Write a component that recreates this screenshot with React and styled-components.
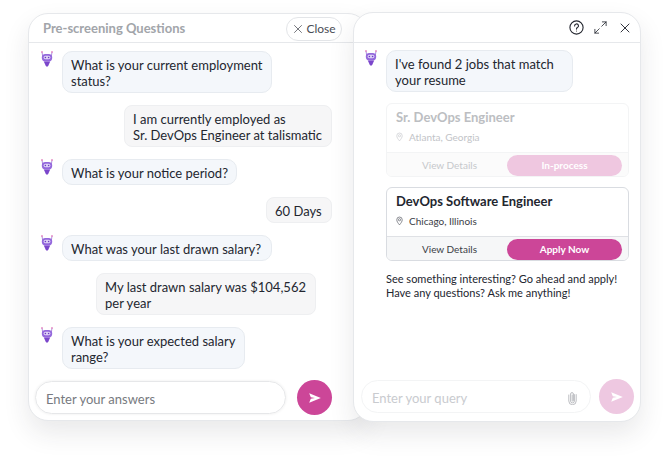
import React from "react";
import styled, { createGlobalStyle } from "styled-components";
import { X, Maximize2 } from "lucide-react";

const GlobalStyle = createGlobalStyle`
  html, body {
    margin: 0;
    padding: 0;
    background: #fff;
    font-family: "Lato", "Liberation Sans", sans-serif;
    color: #23262f;
  }
`;

const Stage = styled.div`
  display: flex;
  align-items: flex-start;
  width: 669px;
  height: 466px;
  overflow: hidden;
  padding: 12px 0 0 28px;
  box-sizing: border-box;
`;

const Panel = styled.section`
  background: #fff;
  border: 1px solid #e6e8eb;
  border-radius: 20px;
  box-shadow: 0 12px 26px rgba(40, 40, 50, 0.1);
  box-sizing: border-box;
  display: flex;
  flex-direction: column;
  height: 410px;
  flex: none;
`;

const LeftPanel = styled(Panel)`
  width: 340px;
  margin-top: 1px;
  height: 408px;
`;

const RightPanel = styled(Panel)`
  width: 288px;
  margin-left: -15px;
  position: relative;
  z-index: 1;
`;

const Header = styled.header`
  align-items: center;
  border-bottom: 1px solid #e6e8eb;
  box-sizing: border-box;
  display: flex;
  flex: none;
  height: 30px;
  justify-content: space-between;
`;

const LeftHeader = styled(Header)`
  padding: 0 25px 0 14px;
  height: 29px;
`;

const RightHeader = styled(Header)`
  justify-content: flex-end;
  gap: 8.5px;
  padding: 0 7px 0 0;
`;

const HeaderTitle = styled.h3`
  color: #a2a5aa;
  font-size: 13px;
  font-weight: 700;
  margin: 0;
`;

const CloseButton = styled.button`
  align-items: center;
  background: #fff;
  border: 1px solid #e3e5e8;
  border-radius: 12px;
  color: #4a4d55;
  display: flex;
  font-family: inherit;
  font-size: 12px;
  gap: 1px;
  height: 24px;
  justify-content: center;
  margin-top: 1px;
  padding: 0 1px 0 0;
  width: 56px;
`;

const IconButton = styled.span`
  align-items: center;
  color: #23262f;
  display: flex;
  height: 16px;
  justify-content: center;
  width: 16px;
`;

const Messages = styled.div`
  display: flex;
  flex: 1;
  flex-direction: column;
  gap: 12px;
  overflow: hidden;
  padding: ${(props) => props.$top}px 0 0 ${(props) => props.$left}px;
`;

const BotRow = styled.div`
  align-items: flex-start;
  display: flex;
  gap: 9px;
`;

const Avatar = styled.svg`
  flex: none;
  height: 16px;
  margin-left: 2px;
  width: 12px;
`;

const Bubble = styled.div`
  background: #f4f7fb;
  border: 1px solid #e7ebf0;
  border-radius: 10px;
  box-sizing: border-box;
  font-size: 13px;
  line-height: 16px;
  padding: 5px 8px 3px;
  width: ${(props) => props.$width}px;
`;

const Answer = styled.div`
  align-self: flex-end;
  background: #f6f6f7;
  border: 1px solid #eeeff1;
  border-radius: 8px;
  box-sizing: border-box;
  font-size: 13px;
  line-height: 16px;
  margin-right: ${(props) => props.$inset}px;
  padding: 5px 8px 3px;
  white-space: pre-line;
  width: ${(props) => props.$width}px;
`;

const Composer = styled.div`
  align-items: center;
  display: flex;
  flex: none;
  justify-content: space-between;
  padding: ${(props) => props.$pad};
`;

const InputBox = styled.div`
  align-items: center;
  border: 1px solid ${(props) => (props.$dim ? "#f3f4f5" : "#e6e7e9")};
  border-radius: 17px;
  box-shadow: ${(props) => (props.$dim ? "none" : "0 0 3px rgba(0, 0, 0, 0.08)")};
  box-sizing: border-box;
  color: ${(props) => (props.$dim ? "#c9cbcf" : "#777a80")};
  display: flex;
  font-size: 13px;
  height: 33px;
  justify-content: space-between;
  padding: 2px 13px 0 10px;
  width: ${(props) => props.$width}px;
`;

const SendButton = styled.div`
  align-items: center;
  background: ${(props) => (props.$dim ? "#eec8e1" : "#cc4698")};
  border-radius: 50%;
  display: flex;
  flex: none;
  height: 35px;
  justify-content: center;
  width: 35px;
`;

const JobList = styled.div`
  display: flex;
  flex-direction: column;
  gap: 10px;
  margin: -1px 11px 0 23px;
`;

const JobCard = styled.article`
  border: 1px solid ${(props) => (props.$faded ? "#f3f4f5" : "#d9dce1")};
  border-radius: 6px;
  box-sizing: border-box;
  color: ${(props) => (props.$faded ? "#bcbec2" : "#23262f")};
  height: 74px;
  overflow: hidden;
`;

const JobInfo = styled.div`
  box-sizing: border-box;
  height: 48px;
  padding: 5px 9px 0;
`;

const JobTitle = styled.h4`
  font-size: 13px;
  font-weight: 700;
  line-height: 16px;
  margin: 0 0 6px;
`;

const JobPlace = styled.div`
  align-items: center;
  color: ${(props) => (props.$faded ? "#c2c4c8" : "#3b3e46")};
  display: flex;
  font-size: 10px;
  gap: 6px;
`;

const JobActions = styled.div`
  align-items: center;
  background: ${(props) => (props.$faded ? "#fbfbfb" : "#f6f7f8")};
  border-top: 1px solid ${(props) => (props.$faded ? "#f3f4f5" : "#dfe1e5")};
  box-sizing: border-box;
  display: flex;
  height: 25px;
  padding-right: 6px;
`;

const DetailsLink = styled.span`
  color: ${(props) => (props.$faded ? "#c6c8cb" : "#3b3e46")};
  flex: 1;
  font-size: 10px;
  padding-left: 5px;
  text-align: center;
`;

const ApplyButton = styled.span`
  align-items: center;
  background: ${(props) => (props.$faded ? "#efc7e0" : "#cc4698")};
  border-radius: 11px;
  color: #fff;
  display: flex;
  flex: none;
  font-size: 10px;
  font-weight: 700;
  height: 21px;
  justify-content: center;
  width: 115px;
`;

const Closing = styled.p`
  font-size: 11px;
  line-height: 14px;
  margin: -1px 0 0 23px;
`;

const BotIcon = () => (
  <Avatar viewBox="0 0 12 16">
    <path d="M1 1 L1.6 5 M11 1 L10.4 5" stroke="#b08fdc" strokeWidth="1" />
    <circle cx="1" cy="1" r="0.9" fill="#e58bc4" />
    <circle cx="11" cy="1" r="0.9" fill="#e58bc4" />
    <rect x="0.8" y="3" width="10.4" height="7.4" rx="3.6" fill="#9468dc" />
    <rect x="2.6" y="4.8" width="6.8" height="3.4" rx="1.7" fill="#ddd0f5" />
    <circle cx="4.4" cy="6.5" r="0.8" fill="#6a3cc0" />
    <circle cx="7.6" cy="6.5" r="0.8" fill="#6a3cc0" />
    <path d="M2.8 10.6 H9.2 L7.4 14.6 L6 16 L4.6 14.6 Z" fill="#7b46cb" />
  </Avatar>
);

const SendIcon = () => (
  <svg width="12" height="10" viewBox="0 0 12 10">
    <path d="M0.2 0.2 L11.8 5 L0.2 9.8 L1.8 5.7 L6 5 L1.8 4.3 Z" fill="#fff" />
  </svg>
);

const ClipIcon = () => (
  <svg width="9" height="14" viewBox="0 0 9 14" fill="none" stroke="#b5b7bb" strokeWidth="0.9" strokeLinecap="round">
    <path d="M6.4 3.6 V10 A1.9 1.9 0 0 1 2.6 10 V3 A1.4 1.4 0 0 1 5.4 3 V9.6 A0.6 0.6 0 0 1 4.2 9.6 V4" />
    <path d="M0.8 4 V10 A3.7 3.7 0 0 0 8.2 10 V3.6" />
  </svg>
);

const PinIcon = ({ color }) => (
  <svg width="7" height="10" viewBox="0 0 9 12" fill="none" stroke={color} strokeWidth="1">
    <path d="M4.5 11 C2.5 8.5 1 6.6 1 4.4 A3.5 3.5 0 0 1 8 4.4 C8 6.6 6.5 8.5 4.5 11 Z" />
    <circle cx="4.5" cy="4.4" r="1.4" />
  </svg>
);

const HelpIcon = () => (
  <svg width="15" height="15" viewBox="0 0 15 15" fill="none" stroke="#23262f" strokeWidth="1.1">
    <circle cx="7.5" cy="7.5" r="6.6" />
    <path d="M5.6 5.9 A1.95 1.95 0 1 1 8.4 7.6 C7.7 8 7.5 8.3 7.5 9.1" strokeLinecap="round" />
    <circle cx="7.5" cy="11" r="0.5" fill="#23262f" stroke="none" />
  </svg>
);

const JobEntry = ({ title, place, action, faded }) => (
  <JobCard $faded={faded}>
    <JobInfo>
      <JobTitle>{title}</JobTitle>
      <JobPlace $faded={faded}>
        <PinIcon color={faded ? "#cfd1d4" : "#6b6e75"} />
        {place}
      </JobPlace>
    </JobInfo>
    <JobActions $faded={faded}>
      <DetailsLink $faded={faded}>View Details</DetailsLink>
      <ApplyButton $faded={faded}>{action}</ApplyButton>
    </JobActions>
  </JobCard>
);

const BotMessage = ({ width, children }) => (
  <BotRow>
    <BotIcon />
    <Bubble $width={width}>{children}</Bubble>
  </BotRow>
);

const App = () => (
  <Stage>
    <GlobalStyle />
    <LeftPanel>
      <LeftHeader>
        <HeaderTitle>Pre-screening Questions</HeaderTitle>
        <CloseButton>
          <X size={14} strokeWidth={1.3} />
          Close
        </CloseButton>
      </LeftHeader>
      <Messages $top={8} $left={10}>
        <BotMessage width={210}>What is your current employment status?</BotMessage>
        <Answer $width={208} $inset={35}>{"I am currently employed as\nSr. DevOps Engineer at talismatic"}</Answer>
        <BotMessage width={175}>What is your notice period?</BotMessage>
        <Answer $width={66} $inset={35}>60 Days</Answer>
        <BotMessage width={210}>What was your last drawn salary?</BotMessage>
        <Answer $width={220} $inset={51}>My last drawn salary was $104,562 per year</Answer>
        <BotMessage width={183}>What is your expected salary range?</BotMessage>
      </Messages>
      <Composer $pad="0 35px 5px 6px">
        <InputBox $width={251}>Enter your answers</InputBox>
        <SendButton><SendIcon /></SendButton>
      </Composer>
    </LeftPanel>
    <RightPanel>
      <RightHeader>
        <IconButton><HelpIcon /></IconButton>
        <IconButton><Maximize2 size={15} strokeWidth={1.3} /></IconButton>
        <IconButton><X size={20} strokeWidth={1.4} /></IconButton>
      </RightHeader>
      <Messages $top={7} $left={9}>
        <BotMessage width={187}>I've found 2 jobs that match your resume</BotMessage>
        <JobList>
          <JobEntry faded title="Sr. DevOps Engineer" place="Atlanta, Georgia" action="In-process" />
          <JobEntry title="DevOps Software Engineer" place="Chicago, Illinois" action="Apply Now" />
        </JobList>
        <Closing>
          See something interesting? Go ahead and apply!
          <br />
          Have any questions? Ask me anything!
        </Closing>
      </Messages>
      <Composer $pad="0 6px 7px 7px">
        <InputBox $width={230} $dim>
          Enter your query
          <ClipIcon />
        </InputBox>
        <SendButton $dim><SendIcon /></SendButton>
      </Composer>
    </RightPanel>
  </Stage>
);

export default App;
